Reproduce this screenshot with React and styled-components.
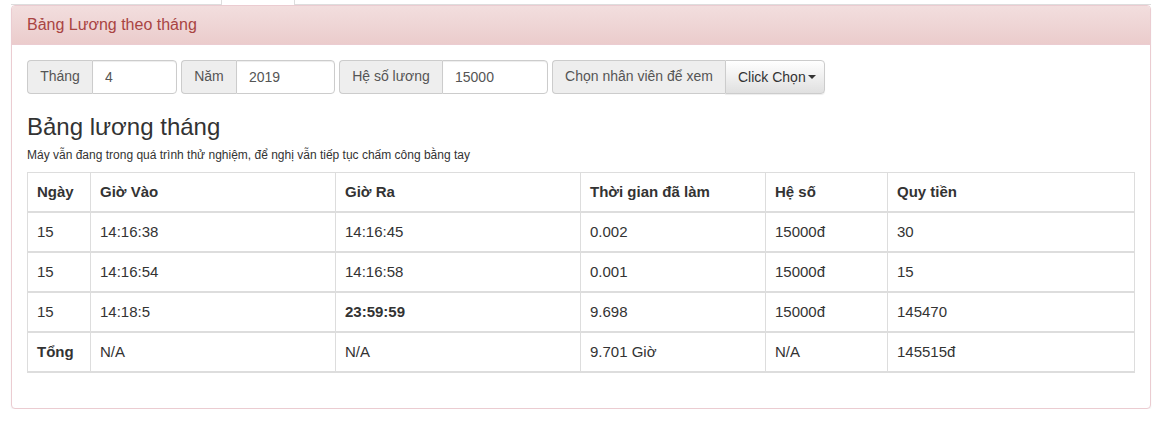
import styled, { createGlobalStyle } from "styled-components";

const rows = [
  { day: "15", in: "14:16:38", out: "14:16:45", time: "0.002", rate: "15000đ", money: "30" },
  { day: "15", in: "14:16:54", out: "14:16:58", time: "0.001", rate: "15000đ", money: "15" },
  { day: "15", in: "14:18:5", out: "23:59:59", time: "9.698", rate: "15000đ", money: "145470", strongOut: true },
];

const fields = [
  { label: "Tháng", value: "4", labelWidth: 65, width: 85 },
  { label: "Năm", value: "2019", labelWidth: 55, width: 99 },
  { label: "Hệ số lương", value: "15000", labelWidth: 103, width: 106 },
];

const App = () => {
  return (
    <>
      <GlobalStyle />
      <Page>
        <TabStrip>
          <ActiveTab />
        </TabStrip>
        <Panel>
          <PanelHeading>Bảng Lương theo tháng</PanelHeading>
          <PanelBody>
            <Toolbar>
              {fields.map((f) => (
                <InputGroup key={f.label}>
                  <Addon $width={f.labelWidth}>{f.label}</Addon>
                  <Input $width={f.width} defaultValue={f.value} />
                </InputGroup>
              ))}
              <InputGroup>
                <Addon $width={173}>Chọn nhân viên để xem</Addon>
                <DropButton>
                  Click Chọn<Caret />
                </DropButton>
              </InputGroup>
            </Toolbar>
            <Title>Bảng lương tháng</Title>
            <Note>Máy vẫn đang trong quá trình thử nghiệm, để nghị vẫn tiếp tục chấm công bằng tay</Note>
            <Table>
              <colgroup>
                <col style={{ width: 63 }} />
                <col style={{ width: 245 }} />
                <col style={{ width: 245 }} />
                <col style={{ width: 185 }} />
                <col style={{ width: 122 }} />
                <col />
              </colgroup>
              <thead>
                <tr>
                  <Th>Ngày</Th>
                  <Th>Giờ Vào</Th>
                  <Th>Giờ Ra</Th>
                  <Th>Thời gian đã làm</Th>
                  <Th>Hệ số</Th>
                  <Th>Quy tiền</Th>
                </tr>
              </thead>
              <tbody>
                {rows.map((r, i) => (
                  <tr key={i}>
                    <Td>{r.day}</Td>
                    <Td>{r.in}</Td>
                    <Td $bold={r.strongOut}>{r.out}</Td>
                    <Td>{r.time}</Td>
                    <Td>{r.rate}</Td>
                    <Td>{r.money}</Td>
                  </tr>
                ))}
                <tr>
                  <Td $bold>Tổng</Td>
                  <Td>N/A</Td>
                  <Td>N/A</Td>
                  <Td>9.701 Giờ</Td>
                  <Td>N/A</Td>
                  <Td>145515đ</Td>
                </tr>
              </tbody>
            </Table>
          </PanelBody>
        </Panel>
      </Page>
    </>
  );
};

export default App;

const GlobalStyle = createGlobalStyle`
  body {
    margin: 0;
    background: #fff;
    font-family: "Liberation Sans", Arial, sans-serif;
    font-size: 14px;
    line-height: 1.42857;
    color: #333;
  }
  * {
    box-sizing: border-box;
  }
`;

const Page = styled.div`
  padding: 0 14px 0 11px;
`;

const TabStrip = styled.div`
  display: flex;
  height: 5px;
  border-bottom: 1px solid #ddd;
  padding-left: 210px;
`;

const ActiveTab = styled.div`
  width: 74px;
  height: 5px;
  background: #fff;
  border-left: 1px solid #ddd;
  border-right: 1px solid #ddd;
`;

const Panel = styled.div`
  border: 1px solid #ebccd1;
  border-radius: 4px;
  background: #fff;
  box-shadow: 0 1px 2px rgba(0, 0, 0, 0.05);
`;

const PanelHeading = styled.div`
  padding: 10px 15px;
  font-size: 16px;
  line-height: 1.1;
  color: #a94442;
  background: linear-gradient(to bottom, #f2dede 0%, #ebcccc 100%);
  border-bottom: 1px solid #ebccd1;
  border-radius: 3px 3px 0 0;
`;

const PanelBody = styled.div`
  padding: 15px;
`;

const Toolbar = styled.div`
  display: flex;
  gap: 4px;
`;

const InputGroup = styled.div`
  display: flex;
  height: 34px;
`;

const Addon = styled.span`
  display: flex;
  align-items: center;
  justify-content: center;
  width: ${(p) => p.$width}px;
  padding: 6px 0;
  font-size: 14px;
  color: #555;
  background: #eee;
  border: 1px solid #ccc;
  border-right: 0;
  border-radius: 4px 0 0 4px;
  white-space: nowrap;
`;

const Input = styled.input`
  width: ${(p) => p.$width}px;
  height: 34px;
  padding: 6px 12px;
  font-family: inherit;
  font-size: 14px;
  color: #555;
  background: #fff;
  border: 1px solid #ccc;
  border-radius: 0 4px 4px 0;
  box-shadow: inset 0 1px 1px rgba(0, 0, 0, 0.075);
  outline: none;
`;

const DropButton = styled.button`
  display: flex;
  align-items: center;
  width: 100px;
  padding: 6px 12px;
  font-family: inherit;
  font-size: 14px;
  color: #333;
  background: linear-gradient(to bottom, #fff 0%, #e0e0e0 100%);
  border: 1px solid #ccc;
  border-radius: 0 4px 4px 0;
  box-shadow: inset 0 1px 0 rgba(255, 255, 255, 0.15), 0 1px 1px rgba(0, 0, 0, 0.075);
  white-space: nowrap;
`;

const Caret = styled.span`
  display: inline-block;
  width: 0;
  height: 0;
  margin-left: 2px;
  border-top: 4px solid #333;
  border-left: 4px solid transparent;
  border-right: 4px solid transparent;
`;

const Title = styled.h3`
  margin: 20px 0 0;
  font-size: 24px;
  font-weight: 500;
  line-height: 1.1;
  color: #333;
`;

const Note = styled.div`
  margin: 7px 0 8px;
  font-size: 12px;
  line-height: 17px;
`;

const Table = styled.table`
  width: 100%;
  table-layout: fixed;
  border-collapse: collapse;
  border: 1px solid #ddd;
  margin-bottom: 20px;
`;

const Th = styled.th`
  padding: 9px 9px;
  font-size: 15px;
  line-height: 20px;
  text-align: left;
  font-weight: 700;
  border: 1px solid #ddd;
  border-bottom: 2px solid #ddd;
`;

const Td = styled.td`
  padding: 9px 9px;
  font-size: 15px;
  line-height: 20px;
  font-weight: ${(p) => (p.$bold ? 700 : 400)};
  border: 1px solid #ddd;
  border-bottom: 2px solid #ddd;
`;
